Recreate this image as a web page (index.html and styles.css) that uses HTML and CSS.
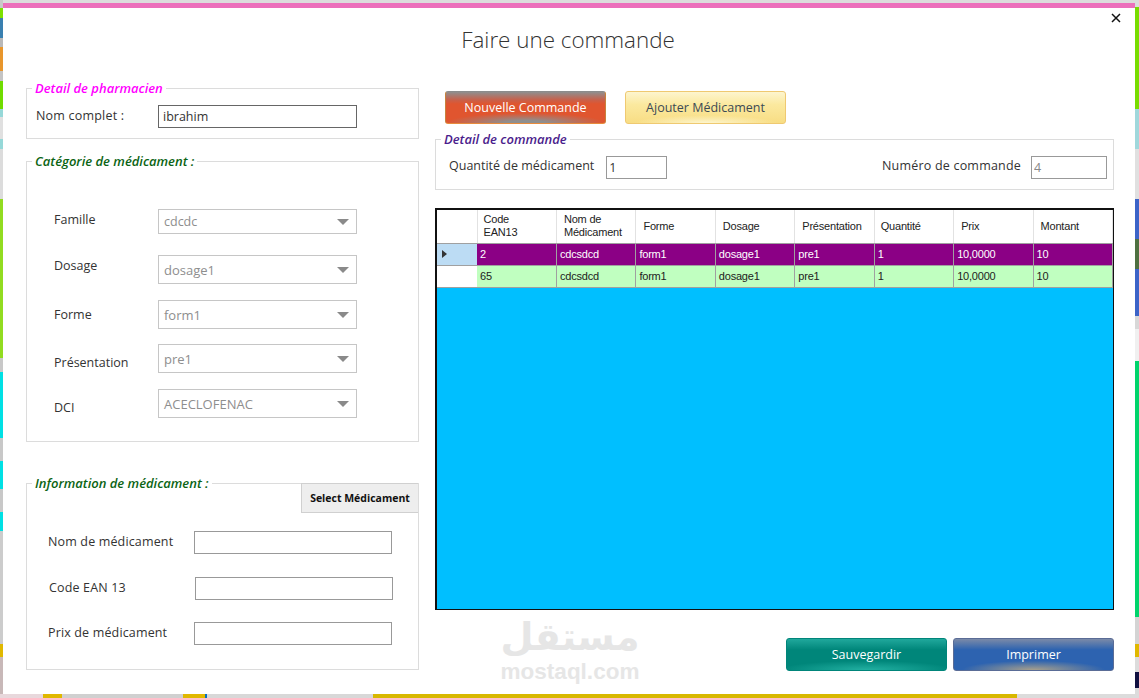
FILE: index.html
```html
<!DOCTYPE html>
<html lang="fr">
<head>
  <meta charset="utf-8">
  <title>Faire une commande</title>
  <link rel="stylesheet" href="styles.css">
</head>
<body>
  <div class="desktop">
    <div class="strip strip-left"></div>

    <main class="window">
      <button class="close" aria-label="Fermer">
        <svg viewBox="0 0 10 10" width="10" height="10"><path d="M1 1l8 8M9 1l-8 8" stroke="#111" stroke-width="1.5" fill="none"/></svg>
      </button>
      <h1 class="title">Faire une commande</h1>

      <div class="columns">
        <section class="col-left">
          <fieldset class="group group-pharmacien">
            <legend class="legend-pink">Detail de pharmacien</legend>
            <div class="row">
              <label class="lbl lbl-nom">Nom complet :</label>
              <input class="input input-dark" value="ibrahim">
            </div>
          </fieldset>

          <fieldset class="group group-categorie">
            <legend class="legend-green">Catégorie de médicament :</legend>
            <div class="select-row sr-famille">
              <label class="lbl">Famille</label>
              <div class="select"><span>cdcdc</span><b class="arrow"></b></div>
            </div>
            <div class="select-row sr-tall">
              <label class="lbl">Dosage</label>
              <div class="select select-tall"><span>dosage1</span><b class="arrow"></b></div>
            </div>
            <div class="select-row sr-short">
              <label class="lbl lbl-mid">Forme</label>
              <div class="select select-tall"><span>form1</span><b class="arrow"></b></div>
            </div>
            <div class="select-row sr-tall">
              <label class="lbl lbl-low">Présentation</label>
              <div class="select select-tall"><span>pre1</span><b class="arrow"></b></div>
            </div>
            <div class="select-row sr-tall">
              <label class="lbl lbl-low">DCI</label>
              <div class="select select-tall"><span>ACECLOFENAC</span><b class="arrow"></b></div>
            </div>
          </fieldset>

          <fieldset class="group group-info">
            <legend class="legend-green">Information de médicament :</legend>
            <button class="select-btn">Select Médicament</button>
            <div class="info-row info-first">
              <label class="lbl">Nom de médicament</label>
              <input class="input input-grey">
            </div>
            <div class="info-row info-code">
              <label class="lbl">Code EAN 13</label>
              <input class="input input-grey">
            </div>
            <div class="info-row">
              <label class="lbl">Prix de médicament</label>
              <input class="input input-grey">
            </div>
          </fieldset>
        </section>

        <section class="col-right">
          <div class="actions">
            <button class="btn btn-red">Nouvelle Commande</button>
            <button class="btn btn-yellow">Ajouter Médicament</button>
          </div>

          <fieldset class="group group-commande">
            <legend class="legend-purple">Detail de commande</legend>
            <div class="commande-row">
              <label class="lbl">Quantité de médicament</label>
              <input class="input input-grey input-qty" value="1">
              <label class="lbl lbl-num">Numéro de commande</label>
              <input class="input input-grey input-num" value="4" readonly>
            </div>
          </fieldset>

          <div class="grid">
            <table>
              <thead>
                <tr>
                  <th class="rowhead"></th>
                  <th class="tight">Code<br>EAN13</th>
                  <th>Nom de<br>Médicament</th>
                  <th>Forme</th>
                  <th>Dosage</th>
                  <th>Présentation</th>
                  <th class="tight">Quantité</th>
                  <th>Prix</th>
                  <th>Montant</th>
                </tr>
              </thead>
              <tbody>
                <tr class="row-selected">
                  <td class="rowhead rowhead-on"><b class="caret"></b></td>
                  <td>2</td><td>cdcsdcd</td><td>form1</td><td>dosage1</td><td>pre1</td><td>1</td><td>10,0000</td><td>10</td>
                </tr>
                <tr class="row-normal">
                  <td class="rowhead"></td>
                  <td>65</td><td>cdcsdcd</td><td>form1</td><td>dosage1</td><td>pre1</td><td>1</td><td>10,0000</td><td>10</td>
                </tr>
              </tbody>
            </table>
          </div>

          <div class="footer">
            <div class="watermark">
              <span class="wm-ar" lang="ar" dir="rtl">مستقل</span>
              <span class="wm-en">mostaql.com</span>
            </div>
            <button class="btn btn-teal">Sauvegardir</button>
            <button class="btn btn-blue">Imprimer</button>
          </div>
        </section>
      </div>
    </main>

    <div class="strip strip-right"></div>
  </div>

  <div class="strip-bottom"></div>
</body>
</html>
```

FILE: styles.css
```css
html, body {
  margin: 0;
  padding: 0;
  height: 698px;
  overflow: hidden;
  background: #dcdcdc;
}
body {
  font-family: "Open Sans", "Noto Sans", sans-serif;
  color: #222;
}
.desktop {
  display: flex;
  height: 694px;
}

/* bits of the desktop showing behind the window */
.strip { flex: none; }
.strip-left {
  width: 3px;
  background: linear-gradient(
    #c8c8c8 8px,
    #7ee000 8px 18px,
    #3a80b0 18px 38px,
    #b8b8b8 38px 47px,
    #e8962c 47px 71px,
    #c4c4c4 71px 81px,
    #70dc00 81px 109px,
    #96d8d8 109px 117px,
    #e0e0e0 117px 139px,
    #96d8d8 139px 149px,
    #dcdcdc 149px 199px,
    #92dc20 199px 358px,
    #c8c8c8 358px 372px,
    #00e0e4 372px 438px,
    #c8c8c8 438px 461px,
    #00e0e4 461px 489px,
    #c8c8c8 489px 512px,
    #00e0e4 512px 531px,
    #cccccc 531px 644px,
    #e0b800 644px 657px,
    #c8b8b8 657px
  );
}
.strip-right {
  width: 4px;
  background: linear-gradient(
    #dcdcdc 7px,
    #78dc00 7px 109px,
    #a0d8dc 109px 149px,
    #e0e0e0 149px 199px,
    #3c64c8 199px 239px,
    #4e7040 239px 269px,
    #3c64c8 269px 316px,
    #d8d8d8 316px 329px,
    #f0f0f0 329px 361px,
    #00d46c 361px 617px,
    #d4d4d4 617px 644px,
    #e0b800 644px 657px,
    #dcdcdc 657px 672px,
    #101040 672px 688px,
    #dcdcdc 688px
  );
}
.strip-bottom {
  height: 4px;
  background: linear-gradient(
    to right,
    #e8d8dc 43px,
    #e0b800 43px 62px,
    #d0d0d0 62px 183px,
    #e0b800 183px 205px,
    #0a70c0 205px 207px,
    #d8d8d8 207px 373px,
    #d8b800 373px 1017px,
    #dcdcdc 1017px
  );
}

/* window */
.window {
  position: relative;
  flex: 1;
  margin-top: 3px;
  background: #fff;
  border-top: 5px solid #ec6fbb;
  box-sizing: border-box;
}
.close {
  position: absolute;
  right: 13px;
  top: 4px;
  padding: 0;
  width: 12px;
  height: 12px;
  border: 0;
  background: none;
}
.close svg { display: block; margin: 1px; }
.title {
  margin: 0;
  padding: 15px 2px 0 0;
  height: 64px;
  box-sizing: border-box;
  text-align: center;
  font-size: 22.4px;
  font-weight: 300;
  line-height: 34px;
  color: #333;
}
.columns {
  display: flex;
  padding-left: 23px;
  gap: 16px;
}
.col-left {
  width: 393px;
  flex: none;
}
.col-right {
  width: 679px;
  flex: none;
}

/* group boxes */
.group {
  position: relative;
  margin: 0;
  padding: 0;
  border: 1px solid #dcdcdc;
  min-width: 0;
  box-sizing: border-box;
}
.group legend {
  margin-left: 5px;
  padding: 0 3px;
  font-size: 13px;
  line-height: 16px;
  font-weight: 600;
  font-style: italic;
}
.legend-pink { color: #ff00ff; }
.legend-green { color: #0b6414; }
.legend-purple { color: #4b1d8c; }

.group-pharmacien {
  height: 59px;
  margin-top: 8px;
}
.group-categorie {
  height: 289px;
  margin-top: 14px;
  padding-top: 40px;
}
.group-info {
  height: 195px;
  margin-top: 33px;
}

.lbl {
  font-size: 12.5px;
  font-weight: 400;
  line-height: 18px;
  color: #333;
}
.row {
  display: flex;
  align-items: center;
  padding: 9px 0 0 9px;
}
.lbl-nom {
  width: 122px;
  margin-top: -1px;
  letter-spacing: .2px;
}

.input {
  box-sizing: border-box;
  margin: 0;
  padding: 0 4px;
  border: 1px solid #999;
  border-radius: 0;
  background: #fff;
  font: 12.5px "Open Sans", "Noto Sans", sans-serif;
  color: #333;
  outline: none;
}
.input-dark {
  width: 199px;
  height: 23px;
  border-color: #666;
}
.input-grey {
  width: 198px;
  height: 23px;
}

/* combos */
.select-row {
  display: flex;
  padding-left: 27px;
}
.select-row .lbl {
  width: 104px;
  padding-top: 2px;
  flex: none;
}
.select-row .lbl-mid { padding-top: 6px; }
.select-row .lbl-low { padding-top: 10px; }
.sr-famille { height: 46px; }
.sr-tall { height: 45px; }
.sr-short { height: 44px; }
.select {
  box-sizing: border-box;
  display: flex;
  align-items: center;
  justify-content: space-between;
  width: 199px;
  height: 25px;
  padding: 0 7px 0 5px;
  border: 1px solid #c6c6c6;
  font-size: 12.5px;
  color: #8e8e8e;
}
.select-tall { height: 29px; font-size: 13px; }
.arrow {
  width: 0;
  height: 0;
  border-left: 6px solid transparent;
  border-right: 6px solid transparent;
  border-top: 6px solid #8a8a8a;
}

/* medicament box */
.select-btn {
  position: absolute;
  right: 0;
  top: -8px;
  width: 117px;
  height: 30px;
  padding: 0;
  border: 1px solid #d0d0d0;
  border-right: 0;
  background: #eeeeee;
  font: 700 10.5px "Open Sans", sans-serif;
  color: #111;
}
.info-row {
  display: flex;
  align-items: center;
  padding-left: 21px;
  height: 23px;
  margin-bottom: 23px;
}
.info-row .lbl {
  width: 146px;
  margin-top: -1px;
  flex: none;
  letter-spacing: .15px;
}
.info-first { margin-top: 40px; }
.info-code { padding-left: 22px; margin-bottom: 22px; }

/* right column */
.actions {
  display: flex;
  gap: 19px;
  padding: 19px 0 0 10px;
  height: 33px;
}
.btn {
  box-sizing: border-box;
  width: 161px;
  height: 33px;
  padding: 0;
  border: 1px solid;
  border-radius: 3px;
  font: 12.5px "Open Sans", "Noto Sans", sans-serif;
}
.btn-red {
  border-color: #8c8c8c #c8823c #e88b3c;
  color: #fff;
  background:
    radial-gradient(ellipse 50% 32% at 50% 100%, #8f8f8f 0, #8f8f8f 25%, rgba(143, 143, 143, 0) 100%),
    linear-gradient(#8f8f8f 0, #c8604a 8px, #e0552f 12px, #e0552f 100%);
}
.btn-yellow {
  border-color: #efc971;
  color: #3c4a55;
  background:
    radial-gradient(ellipse 45% 25% at 50% 100%, #fdf6cf 0, rgba(253, 246, 207, 0) 100%),
    linear-gradient(#fdf5cf 0, #fbe99f 40%, #f8dd84 100%);
}
.btn-teal {
  border-color: #00857a;
  color: #fff;
  background:
    radial-gradient(ellipse 55% 30% at 50% 100%, #22b0a2 0, rgba(34, 176, 162, 0) 100%),
    linear-gradient(#20a89c 0, #00867a 35%, #00867a 100%);
}
.btn-blue {
  border-color: #5a6c96;
  color: #fff;
  background:
    radial-gradient(ellipse 45% 30% at 50% 100%, #a8a08c 0, rgba(168, 160, 140, 0) 100%),
    linear-gradient(#7b8aa8 0, #2d63b0 35%, #2d63b0 100%);
}

.group-commande {
  height: 59px;
  margin-top: 7px;
  width: 679px;
}
.commande-row {
  display: flex;
  align-items: center;
  padding: 9px 6px 0 13px;
}
.commande-row .lbl { margin-top: -4px; }
.input-qty {
  width: 61px;
  margin-left: 12px;
  padding-left: 2px;
}
.input-num {
  width: 76px;
  margin-left: 10px;
  padding-left: 2px;
  color: #888;
}
.lbl-num {
  margin-left: auto;
  letter-spacing: .2px;
}

/* data grid */
.grid {
  box-sizing: border-box;
  height: 402px;
  margin-top: 18px;
  border: 1px solid #111;
  border-width: 2px 1px 1px 2px;
  background: #00bfff;
}
.grid table {
  width: 100%;
  border-collapse: collapse;
  table-layout: fixed;
  font: 11px "Liberation Sans", Arial, sans-serif;
  letter-spacing: -0.2px;
}
.grid th {
  height: 33px;
  padding: 0 0 0 7px;
  background: #fff;
  border-right: 1px solid #e2e2e2;
  border-bottom: 1px solid #a0a0a0;
  font-weight: 400;
  line-height: 13px;
  text-align: left;
  color: #222;
  box-sizing: border-box;
}
.grid th.tight { padding-left: 6px; }
.grid th.rowhead { width: 40px; }
.grid td {
  height: 22px;
  padding: 0 0 0 3px;
  border-right: 1px solid #a0a0a0;
  border-bottom: 1px solid #a0a0a0;
  white-space: nowrap;
  box-sizing: border-box;
}
.grid td.rowhead {
  background: #fff;
  border-right: 0;
  padding: 0 0 0 5px;
}
.grid td.rowhead-on { background: #bcdcf4; }
.row-selected td { background: #8b0085; color: #fff; }
.row-normal td { background: #c0ffc0; color: #222; }
.caret {
  display: block;
  width: 0;
  height: 0;
  border-top: 4px solid transparent;
  border-bottom: 4px solid transparent;
  border-left: 5px solid #333;
}

/* footer */
.footer {
  display: flex;
  gap: 6px;
  justify-content: flex-end;
  position: relative;
  padding-top: 28px;
}
.watermark {
  position: absolute;
  left: 65px;
  top: 5px;
  width: 140px;
  display: flex;
  flex-direction: column;
  align-items: center;
  color: #e6e6e6;
}
.wm-ar {
  font: 700 38px/45px "DejaVu Sans", sans-serif;
}
.wm-en {
  font: 700 22.5px/24px "Liberation Sans", Arial, sans-serif;
}
```
